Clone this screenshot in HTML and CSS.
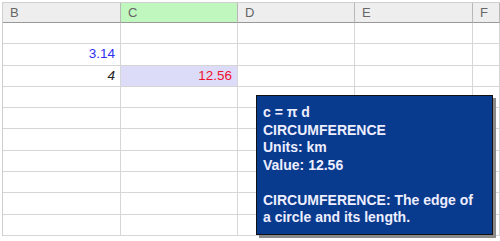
FILE: index.html
```
<!DOCTYPE html>
<html lang="en">
<head>
    <meta charset="UTF-8">
    <link rel="stylesheet" href="styles.css">
    <title>Sheet</title>
</head>
<body>
    <div class="sheet">
        <div class="head">B</div>
        <div class="head active">C</div>
        <div class="head">D</div>
        <div class="head">E</div>
        <div class="head">F</div>

        <div class="cell"></div><div class="cell"></div><div class="cell"></div><div class="cell"></div><div class="cell"></div>
        <div class="cell num blue">3.14</div><div class="cell"></div><div class="cell"></div><div class="cell"></div><div class="cell"></div>
        <div class="cell num italic">4</div><div class="cell num red selected">12.56</div><div class="cell"></div><div class="cell"></div><div class="cell"></div>
        <div class="cell"></div><div class="cell"></div><div class="cell"></div><div class="cell"></div><div class="cell"></div>
        <div class="cell"></div><div class="cell"></div><div class="cell"></div><div class="cell"></div><div class="cell"></div>
        <div class="cell"></div><div class="cell"></div><div class="cell"></div><div class="cell"></div><div class="cell"></div>
        <div class="cell"></div><div class="cell"></div><div class="cell"></div><div class="cell"></div><div class="cell"></div>
        <div class="cell"></div><div class="cell"></div><div class="cell"></div><div class="cell"></div><div class="cell"></div>
        <div class="cell"></div><div class="cell"></div><div class="cell"></div><div class="cell"></div><div class="cell"></div>
        <div class="cell"></div><div class="cell"></div><div class="cell"></div><div class="cell"></div><div class="cell"></div>
    </div>

    <div class="tooltip">
        <p>c = &pi; d</p>
        <p>CIRCUMFERENCE</p>
        <p>Units: km</p>
        <p>Value: 12.56</p>
        <p class="gap">CIRCUMFERENCE: The edge of a circle and its length.</p>
    </div>
</body>
</html>
```

FILE: styles.css
```
* {
    margin: 0;
    padding: 0;
    box-sizing: border-box;
}

body {
    width: 500px;
    height: 241px;
    overflow: hidden;
    background: #fff;
    font-family: "Liberation Sans", Arial, sans-serif;
    font-size: 13.5px;
    position: relative;
}

.sheet {
    margin: 2px 0 0 2px;
    display: grid;
    grid-template-columns: 118px 117px 117px 118px 27px;
    grid-template-rows: 20px repeat(10, 21.3px);
    border-left: 1px solid #cfcfcf;
    border-top: 1px solid #cfcfcf;
    width: 498px;
    overflow: hidden;
}

.head {
    background: #eeeeee;
    color: #666;
    border-right: 1px solid #b8b8b8;
    border-bottom: 1px solid #999;
    padding: 2px 0 0 7px;
    line-height: 16px;
    font-size: 13px;
}

.head.active {
    background: #c0f7bf;
}

.cell {
    border-right: 1px solid #d6d6d6;
    border-bottom: 1px solid #d6d6d6;
    line-height: 20px;
    padding: 0 5px;
}

.num {
    text-align: right;
}

.blue {
    color: #3030f0;
}

.red {
    color: #f01030;
}

.italic {
    font-style: italic;
    color: #222;
}

.selected {
    background: #dcdcf8;
}

.tooltip {
    position: absolute;
    left: 256px;
    top: 95px;
    width: 237px;
    height: 140px;
    background: #083b8e;
    border: 1px solid #111;
    box-shadow: 3px 3px 0 #8a8a8a;
    color: #eef;
    font-weight: bold;
    font-size: 14px;
    line-height: 17.5px;
    padding: 8px 11px 0 6px;
}

.gap {
    margin-top: 17.5px;
}
```
